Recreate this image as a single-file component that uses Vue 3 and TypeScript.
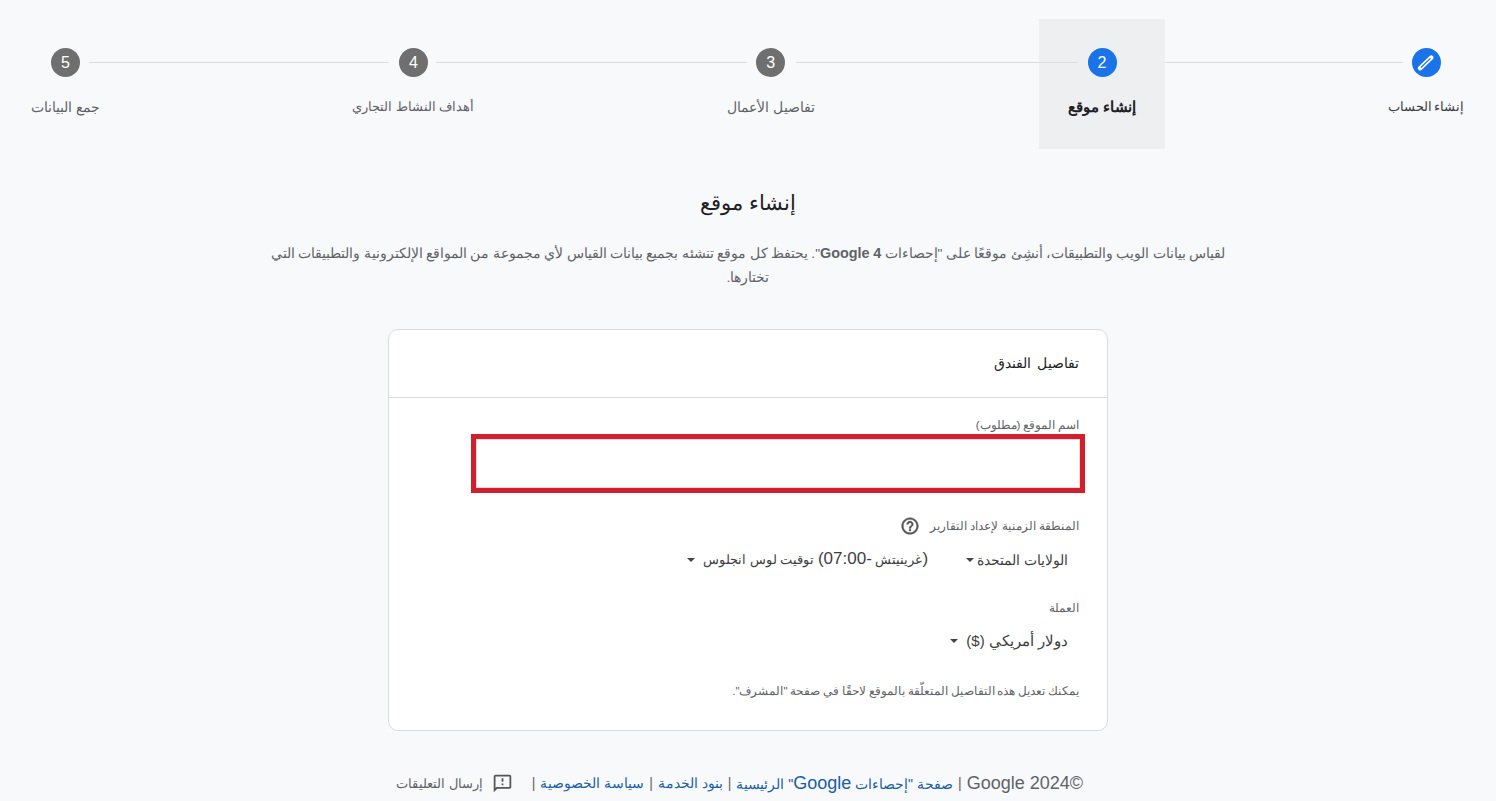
<script setup lang="ts">
interface Step {
  label: string
  num?: string
  icon?: boolean
  active?: boolean
  done?: boolean
  small?: boolean
  line?: number
}
const steps: Step[] = [
  { label: 'إنشاء الحساب', icon: true, done: true, line: 277 },
  { label: 'إنشاء موقع', num: '2', active: true, line: 282 },
  { label: 'تفاصيل الأعمال', num: '3', line: 311 },
  { label: 'أهداف النشاط التجاري', num: '4', small: true, line: 300 },
  { label: 'جمع البيانات', num: '5' }
]
</script>

<template>
  <div class="page" dir="rtl">
    <nav class="stepper">
      <div v-for="s in steps" :key="s.label" class="step" :class="{ active: s.active, done: s.done }">
        <span v-if="s.line" class="line" :style="{ width: s.line + 'px' }"></span>
        <span class="dot">
          <svg v-if="s.icon" viewBox="0 0 18 18" width="18" height="18" fill="none" stroke-linecap="round">
            <path d="M3.2 14.2 14.2 3.6" stroke="#fff" stroke-width="4.6" />
            <path d="M4.2 13.2 13.2 4.6" stroke="#1a73e8" stroke-width="1.2" />
          </svg>
          <template v-else>{{ s.num }}</template>
        </span>
        <span class="step-label" :class="{ small: s.small }">{{ s.label }}</span>
      </div>
    </nav>

    <main class="content">
      <h1 class="title">إنشاء موقع</h1>
      <p class="intro">
        لقياس بيانات الويب والتطبيقات، أنشِئ موقعًا على "إحصاءات <span class="brand">Google 4</span>". يحتفظ كل موقع تنشئه بجميع بيانات القياس لأي مجموعة من المواقع الإلكترونية والتطبيقات التي تختارها.
      </p>

      <section class="card">
        <header class="card-head">تفاصيل الفندق</header>
        <div class="card-body">
          <label class="field-label name-label">اسم الموقع (مطلوب)</label>
          <div class="highlight">
            <input class="name-input" type="text" />
          </div>

          <div class="field-label tz-label">
            <span>المنطقة الزمنية لإعداد التقارير</span>
            <svg class="help" viewBox="0 0 24 24" width="20" height="20" fill="#555" stroke="#555" stroke-width="0.5">
              <path d="M11 18h2v-2h-2v2zm1-16C6.48 2 2 6.48 2 12s4.48 10 10 10 10-4.48 10-10S17.52 2 12 2zm0 18c-4.41 0-8-3.59-8-8s3.59-8 8-8 8 3.59 8 8-3.59 8-8 8zm0-14c-2.21 0-4 1.79-4 4h2c0-1.1.9-2 2-2s2 .9 2 2c0 2-3 1.75-3 5h2c0-2.25 3-2.5 3-5 0-2.21-1.79-4-4-4z" />
            </svg>
          </div>
          <div class="selects">
            <div class="select country"><span>الولايات المتحدة</span><i class="caret"></i></div>
            <div class="select tz"><span><span class="num">(</span>غرينيتش <span class="num wide-num">-07:00</span><span class="num">)</span> توقيت لوس انجلوس</span><i class="caret"></i></div>
          </div>

          <div class="field-label cur-label">العملة</div>
          <div class="selects cur">
            <div class="select"><span>دولار أمريكي <span class="cur-sign">($)</span></span><i class="caret"></i></div>
          </div>

          <p class="note">يمكنك تعديل هذه التفاصيل المتعلّقة بالموقع لاحقًا في صفحة "المشرف".</p>
        </div>
      </section>
    </main>

    <footer class="footer">
      <span class="latin">©2024 Google</span>
      <span class="sep">|</span>
      <a>صفحة "إحصاءات <span class="latin">Google</span>" الرئيسية</a>
      <span class="sep">|</span>
      <a>بنود الخدمة</a>
      <span class="sep">|</span>
      <a>سياسة الخصوصية</a>
      <span class="sep wide">|</span>
      <span class="feedback">
        <svg viewBox="0 0 24 24" width="21" height="21" fill="#555">
          <path d="M20 2H4c-1.1 0-2 .9-2 2v18l4-4h14c1.1 0 2-.9 2-2V4c0-1.1-.9-2-2-2zm0 14H5.17L4 17.17V4h16v12zM11 12h2v2h-2zm0-6h2v4h-2z" />
        </svg>
        <span>إرسال التعليقات</span>
      </span>
    </footer>
  </div>
</template>

<style>
html,
body {
  margin: 0;
  background: #f8f9fb;
}
</style>

<style scoped>
.page {
  box-sizing: border-box;
  width: 1496px;
  height: 801px;
  overflow: hidden;
  padding-top: 19px;
  background: #f8f9fb;
  color: #202124;
  font-family: "Liberation Sans", Arial, sans-serif;
  font-size: 14px;
}
.stepper {
  display: flex;
  justify-content: space-between;
  padding: 0 4px 0 3px;
}
.step {
  position: relative;
  display: flex;
  flex-direction: column;
  align-items: center;
  box-sizing: border-box;
  height: 130px;
  padding: 29px 28px 0;
  color: #5f6368;
}
.step.active {
  padding: 29px 29px 0;
  background: #eeeff1;
  color: #202124;
  font-size: 15.4px;
  font-weight: 700;
}
.step.done {
  padding-left: 27px;
  color: #3c4043;
  font-size: 13px;
  word-spacing: -2px;
}
.line {
  position: absolute;
  top: 43px;
  right: calc(50% + 24px);
  height: 1px;
  background: #dadce0;
}
.dot {
  display: flex;
  align-items: center;
  justify-content: center;
  width: 29px;
  height: 29px;
  border-radius: 50%;
  background: #6f6f6f;
  color: #fff;
  font-size: 16px;
  font-weight: 400;
}
.step.active .dot,
.step.done .dot {
  background: #1a73e8;
}
.step-label {
  margin-top: 20px;
  white-space: nowrap;
  line-height: 20px;
}
.step-label.small {
  font-size: 13.2px;
}
.content {
  display: flex;
  flex-direction: column;
  align-items: center;
}
.title {
  margin: 38px 0 0;
  font-size: 21.3px;
  font-weight: 400;
  line-height: 32px;
}
.intro {
  width: 975px;
  margin: 22px 0 0;
  color: #5f6368;
  font-size: 13.7px;
  line-height: 24px;
  text-align: center;
  word-spacing: -0.4px;
}
.brand {
  font-size: 14.4px;
  font-weight: 700;
}
.card {
  box-sizing: border-box;
  width: 720px;
  height: 402px;
  margin-top: 39px;
  border: 1px solid #dadce0;
  border-radius: 10px;
  background: #fff;
}
.card-head {
  box-sizing: border-box;
  height: 68px;
  padding: 0 28px;
  border-bottom: 1px solid #dadce0;
  font-size: 14.2px;
  line-height: 66px;
  word-spacing: 2px;
}
.card-body {
  padding: 19px 28px 0;
}
.field-label {
  display: block;
  color: #5f6368;
  font-size: 11.7px;
  line-height: 16px;
}
.name-label {
  word-spacing: -0.5px;
}
.highlight {
  box-sizing: border-box;
  width: 614px;
  height: 59px;
  margin-right: -6px;
  margin-top: 1px;
  border: 5px solid #d0202e;
}
.name-input {
  display: block;
  box-sizing: border-box;
  width: 100%;
  height: 100%;
  border: 1px solid #f0d8da;
  background: #fff;
  outline: none;
}
.tz-label {
  display: flex;
  align-items: center;
  gap: 10px;
  height: 22px;
  margin-top: 22px;
  font-size: 12px;
}
.help {
  flex: none;
}
.selects {
  display: flex;
  gap: 38px;
  margin-top: 12px;
  padding-right: 11px;
  color: #3c4043;
  font-size: 14px;
  line-height: 20px;
}
.selects.cur {
  margin-top: 15px;
  font-size: 15px;
}
.select {
  display: flex;
  align-items: center;
  gap: 8px;
  white-space: nowrap;
}
.select.country {
  gap: 3px;
}
.select.tz {
  font-size: 13px;
}
.num {
  font-size: 17px;
}
.wide-num {
  letter-spacing: 1px;
}
.cur-sign {
  font-size: 15px;
}
.caret {
  width: 0;
  height: 0;
  border-left: 4.5px solid transparent;
  border-right: 4.5px solid transparent;
  border-top: 4.5px solid #444;
}
.cur-label {
  margin-top: 30px;
}
.note {
  margin: 32px 0 0;
  color: #5f6368;
  font-size: 11.6px;
  line-height: 16px;
  word-spacing: -0.4px;
}
.footer {
  display: flex;
  align-items: center;
  justify-content: center;
  gap: 5px;
  height: 24px;
  margin-top: 40px;
  padding-right: 17px;
  color: #5f6368;
  font-size: 14px;
  white-space: nowrap;
}
.latin {
  font-size: 18px;
}
.footer a {
  color: #1a5ea8;
}
.sep.wide {
  margin-left: 14px;
}
.feedback {
  display: flex;
  align-items: center;
  gap: 9px;
  font-size: 13px;
}
</style>
